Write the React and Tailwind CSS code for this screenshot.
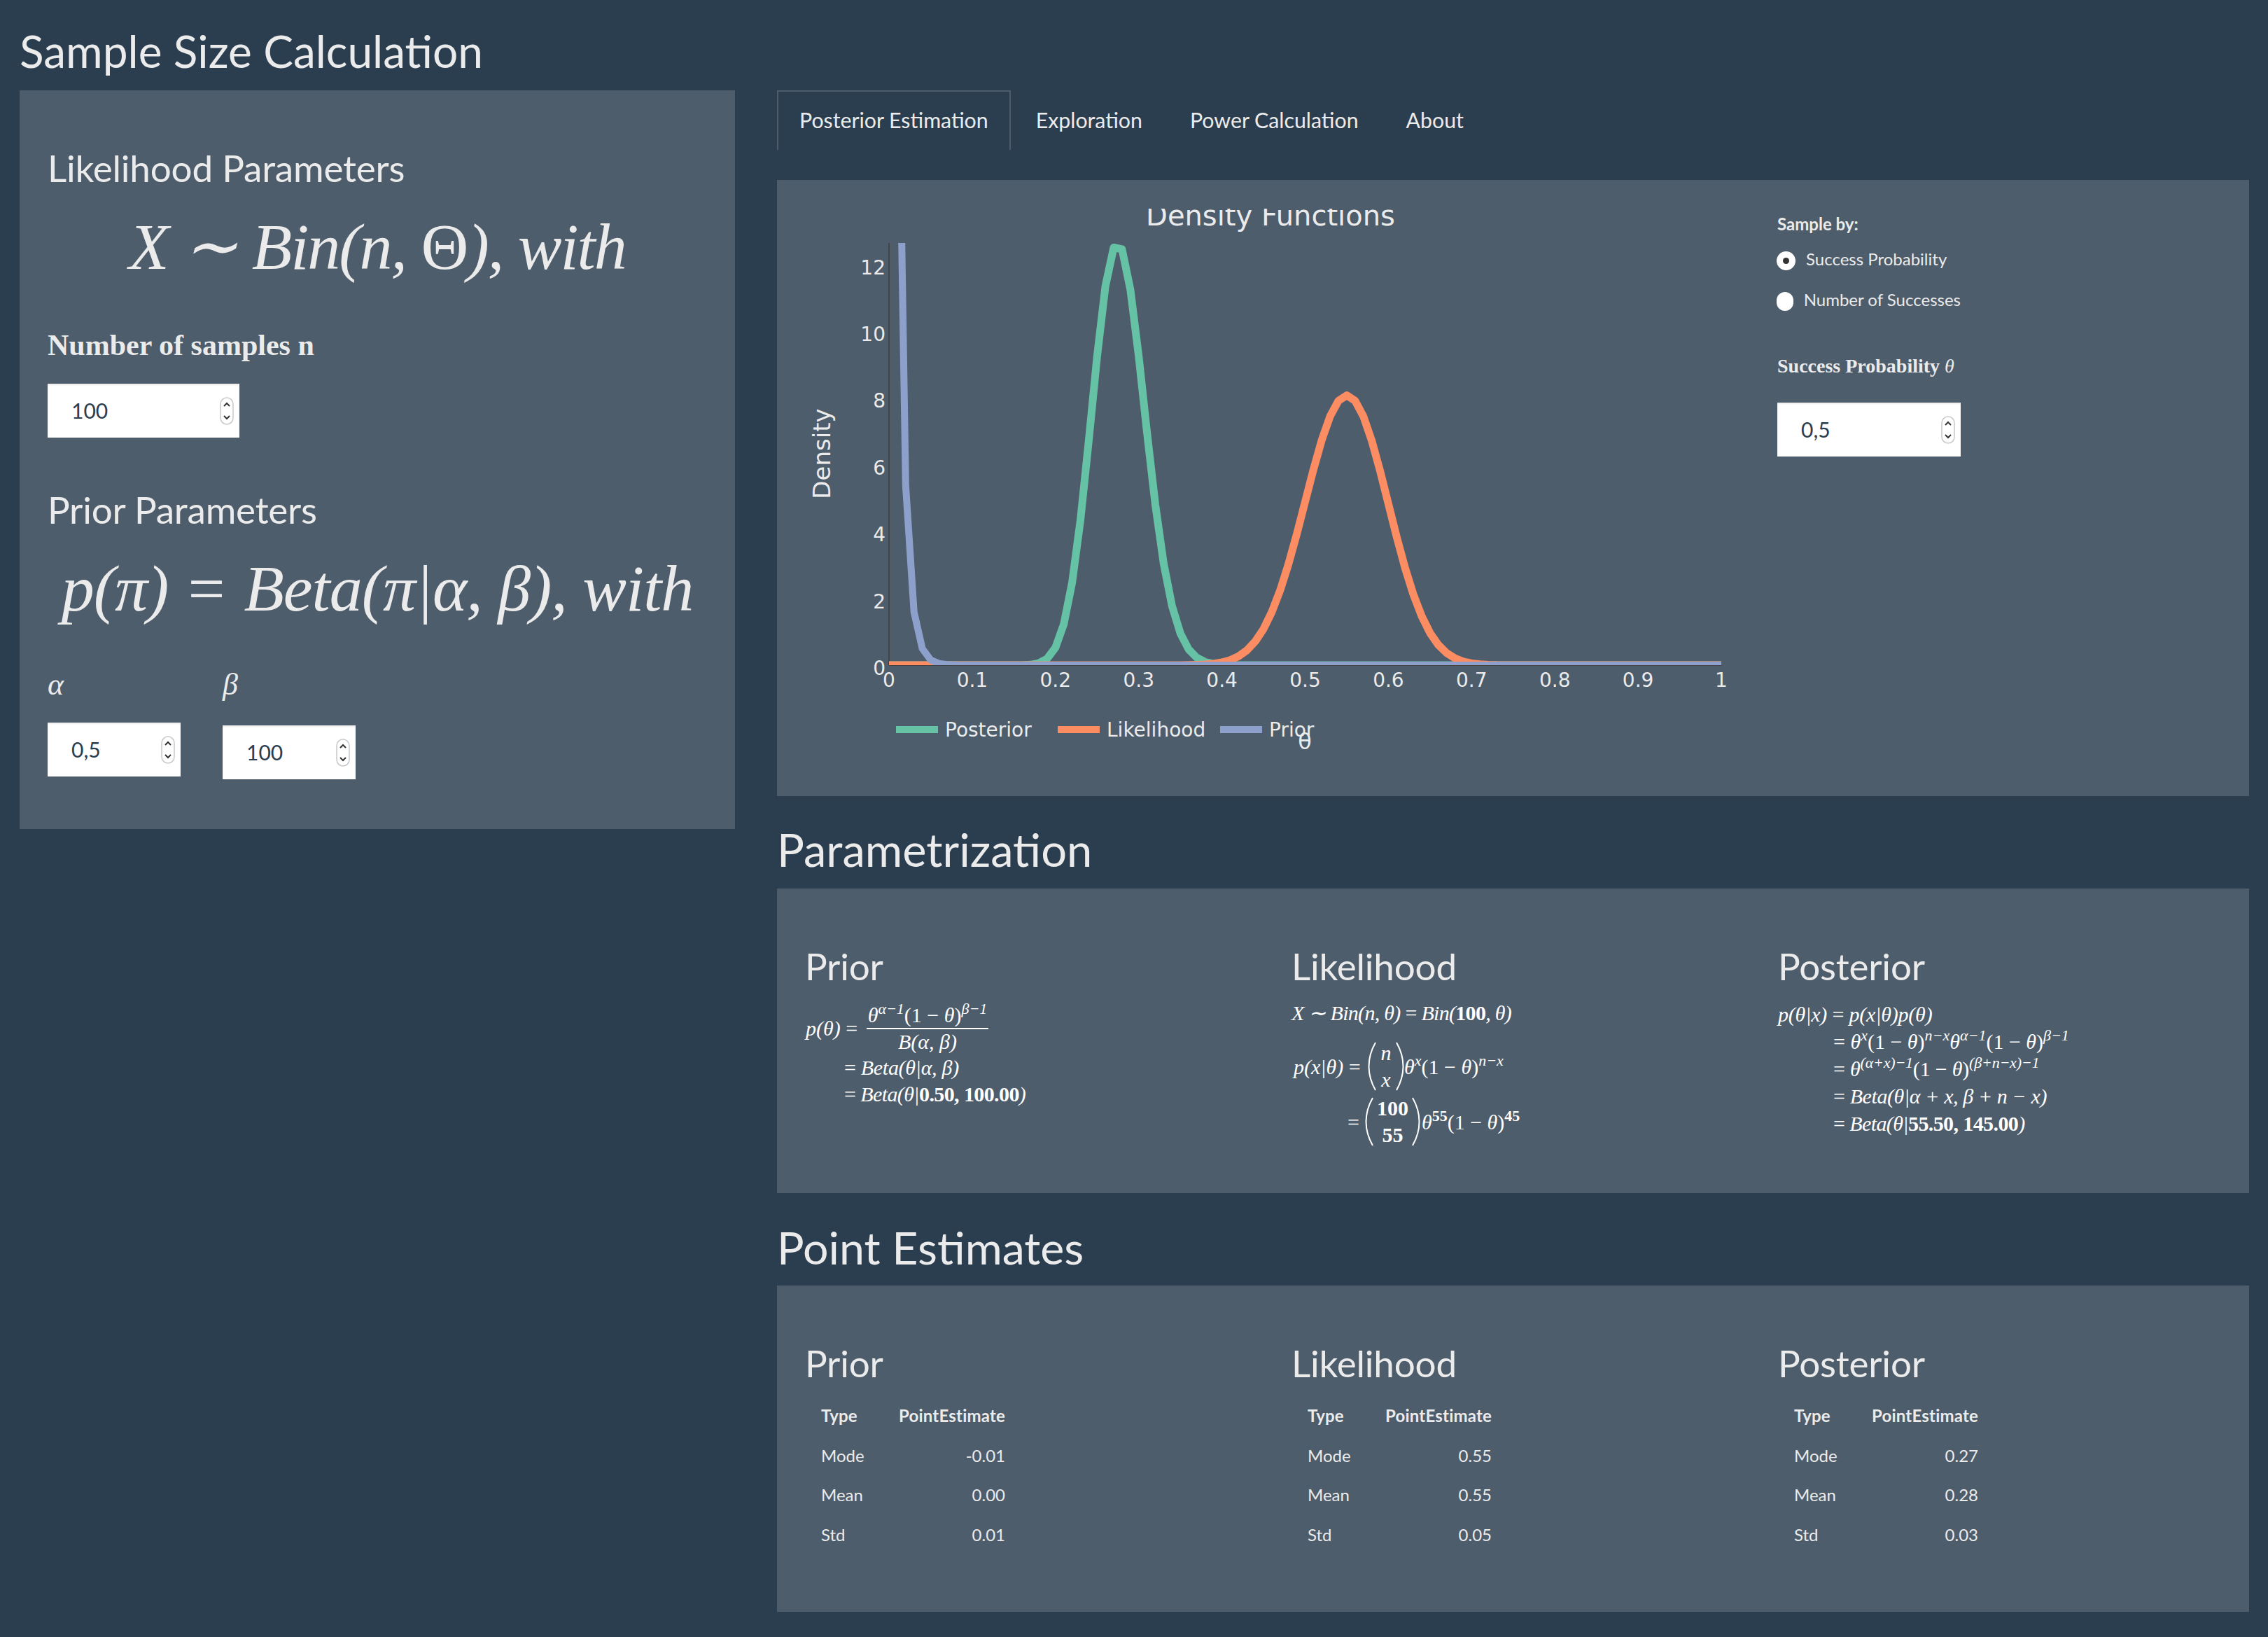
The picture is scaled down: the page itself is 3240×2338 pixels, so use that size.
import React from "react";

const SERIF = "font-['Liberation_Serif',serif]";

function logGamma(z) {
  const c = [76.18009172947146, -86.50532032941677, 24.01409824083091, -1.231739572450155, 0.001208650973866179, -0.000005395239384953];
  let x = z, y = z;
  let tmp = x + 5.5;
  tmp -= (x + 0.5) * Math.log(tmp);
  let ser = 1.000000000190015;
  for (const k of c) ser += k / ++y;
  return -tmp + Math.log((2.5066282746310005 * ser) / x);
}

function betaPdf(x, a, b) {
  if (x <= 0 || x >= 1) return 0;
  return Math.exp((a - 1) * Math.log(x) + (b - 1) * Math.log(1 - x) + logGamma(a + b) - logGamma(a) - logGamma(b));
}

const X0 = 1270, X1 = 2459, Y0 = 950, UNIT = 47.7;
const px = (v) => X0 + v * (X1 - X0);
const py = (v) => Y0 - v * UNIT;

function curve(a, b, from = 0) {
  const pts = [];
  for (let i = from; i <= 100; i++) {
    const x = i / 100;
    pts.push(`${px(x).toFixed(1)},${py(betaPdf(x, a, b)).toFixed(1)}`);
  }
  return pts.join(" ");
}

const series = [
  { name: "Posterior", color: "#66c2a5", a: 55.5, b: 145, from: 0, width: 11, sw: 1280, tx: 1350 },
  { name: "Likelihood", color: "#fc8d62", a: 56, b: 46, from: 0, width: 11, sw: 1511, tx: 1581 },
  { name: "Prior", color: "#8da0cb", a: 0.5, b: 100, from: 1, width: 10, sw: 1743, tx: 1813 },
];

function DensityChart() {
  const dv = { fontFamily: "'DejaVu Sans', sans-serif", fill: "#ebebeb" };
  return (
    <svg viewBox="1110 298 1400 800" className="block w-[1400px] h-[800px] shrink-0">
      <defs>
        <clipPath id="plot">
          <rect x={X0} y={347} width={X1 - X0} height={Y0 - 347} />
        </clipPath>
      </defs>
      <text x={1815} y={322} textAnchor="middle" fontSize={40} style={dv}>Density Functions</text>
      <line x1={X0} x2={X0} y1={347} y2={950} stroke="#444" strokeWidth={2} />
      <line x1={X0} x2={X1} y1={950} y2={950} stroke="#444" strokeWidth={2} />
      <g clipPath="url(#plot)">
        {series.map((s) => (
          <polyline key={s.name} points={curve(s.a, s.b, s.from)} fill="none" stroke={s.color} strokeWidth={s.width} strokeLinejoin="round" />
        ))}
      </g>
      {[0, 2, 4, 6, 8, 10, 12].map((v) => (
        <text key={v} x={1265} y={py(v) + 14} textAnchor="end" fontSize={28} style={dv}>{v}</text>
      ))}
      {[0, 0.1, 0.2, 0.3, 0.4, 0.5, 0.6, 0.7, 0.8, 0.9, 1].map((v) => (
        <text key={v} x={px(v)} y={981} textAnchor="middle" fontSize={28} style={dv}>{v}</text>
      ))}
      <text transform="translate(1186 648) rotate(-90)" textAnchor="middle" fontSize={34} style={dv}>Density</text>
      {series.map((s) => (
        <g key={s.name}>
          <rect x={s.sw} y={1037} width={60} height={10} fill={s.color} />
          <text x={s.tx} y={1052} fontSize={28} style={dv}>{s.name}</text>
        </g>
      ))}
      <text x={1864} y={1070} textAnchor="middle" fontSize={32} style={dv}>θ</text>
    </svg>
  );
}

function NumberBox({ value, className }) {
  return (
    <div className={`flex items-center justify-between bg-white shadow-[inset_0_2px_2px_rgba(0,0,0,0.08)] h-[77px] pl-[34px] pr-[8px] text-[30px] text-[#2b3e50] ${className}`}>
      <span>{value}</span>
      <svg width="20" height="40" viewBox="0 0 20 40" className="shrink-0">
        <rect x="1" y="1" width="18" height="38" rx="9" fill="#fff" stroke="#c8c8c8" strokeWidth="1.5" />
        <path d="M6 13l4-4 4 4M6 27l4 4 4-4" fill="none" stroke="#333" strokeWidth="2" />
      </svg>
    </div>
  );
}

function Radio({ checked, label }) {
  return (
    <div className="flex items-center h-[36px] text-[24px]">
      <span className="flex items-center justify-center w-[27px] h-[27px] rounded-full bg-white -ml-[1px] mt-[4px] mr-[15px]">
        {checked && <span className="w-[9px] h-[9px] rounded-full bg-[#333]" />}
      </span>
      <span>{label}</span>
    </div>
  );
}

const Sup = ({ children }) => <span className="text-[22px] align-[12px] leading-none">{children}</span>;
const B = ({ children }) => <b className="font-bold not-italic">{children}</b>;

function Paren({ flip }) {
  return (
    <svg width="13" height="70" viewBox="0 0 13 70" className={flip ? "-scale-x-100" : ""}>
      <path d="M11 1C3 15 1.5 25 1.5 35S3 55 11 69" fill="none" stroke="#fff" strokeWidth="2" />
    </svg>
  );
}

function Binom({ top, bottom }) {
  return (
    <span className="inline-flex items-center h-[70px]">
      <Paren />
      <span className="flex flex-col items-center justify-between h-[70px] px-[4px] leading-[32px] min-w-[26px]">
        <span>{top}</span>
        <span>{bottom}</span>
      </span>
      <Paren flip />
    </span>
  );
}

const mathCol = `${SERIF} text-[30px] text-white italic`;

function PriorMath() {
  return (
    <div className={`${mathCol} mt-[20px]`}>
      <div className="flex items-center">
        <span className="w-[88px] pl-[1px] whitespace-nowrap">p(θ) <span className="not-italic">=</span></span>
        <span className="flex flex-col items-center w-[174px]">
          <span className="h-[38px] leading-[36px] whitespace-nowrap">θ<Sup>α−1</Sup><span className="not-italic">(1 − </span>θ<span className="not-italic">)</span><Sup>β−1</Sup></span>
          <span className="w-full h-[2px] bg-white" />
          <span className="h-[36px] leading-[36px] whitespace-nowrap">B(α, β)</span>
        </span>
      </div>
      <div className="h-[38px] leading-[38px] ml-[56px] whitespace-nowrap tracking-[-0.3px]"><span className="not-italic">= </span>Beta(θ|α, β)</div>
      <div className="h-[38px] leading-[38px] ml-[56px] whitespace-nowrap tracking-[-0.6px]"><span className="not-italic">= </span>Beta(θ|<B>0.50, 100.00</B>)</div>
    </div>
  );
}

function LikelihoodMath() {
  return (
    <div className={`${mathCol} mt-[19px]`}>
      <div className="h-[36px] leading-[36px] whitespace-nowrap tracking-[-0.7px]">X ∼ Bin(n, θ) <span className="not-italic">=</span> Bin(<B>100</B>, θ)</div>
      <div className="flex items-center h-[70px] mt-[23px] whitespace-nowrap">
        <span className="w-[109px] pl-[3px]">p(x|θ) <span className="not-italic">=</span></span>
        <Binom top="n" bottom="x" />
        <span>θ<Sup>x</Sup><span className="not-italic">(1 − </span>θ<span className="not-italic">)</span><Sup>n−x</Sup></span>
      </div>
      <div className="flex items-center h-[70px] mt-[9px] ml-[80px] whitespace-nowrap">
        <span className="not-italic mr-[8px]">=</span>
        <Binom top={<B>100</B>} bottom={<B>55</B>} />
        <span className="ml-[2px]">θ<Sup><B>55</B></Sup><span className="not-italic">(1 − </span>θ<span className="not-italic">)</span><Sup><B>45</B></Sup></span>
      </div>
    </div>
  );
}

function PosteriorMath() {
  const rows = [
    { track: "tracking-normal", el: <>θ<Sup>x</Sup><span className="not-italic">(1 − </span>θ<span className="not-italic">)</span><Sup>n−x</Sup>θ<Sup>α−1</Sup><span className="not-italic">(1 − </span>θ<span className="not-italic">)</span><Sup>β−1</Sup></> },
    { track: "tracking-[-0.2px]", el: <>θ<Sup>(α+x)−1</Sup><span className="not-italic">(1 − </span>θ<span className="not-italic">)</span><Sup>(β+n−x)−1</Sup></> },
    { track: "tracking-[-0.4px]", el: <>Beta(θ|α + x, β + n − x)</> },
    { track: "tracking-[-0.6px]", el: <>Beta(θ|<B>55.50, 145.00</B>)</> },
  ];
  return (
    <div className={`${mathCol} mt-[19px]`}>
      <div className="h-[39px] leading-[39px] whitespace-nowrap tracking-[-0.2px]">p(θ|x) <span className="not-italic">=</span> p(x|θ)p(θ)</div>
      {rows.map((r, i) => (
        <div key={i} className={`h-[39px] leading-[39px] ml-[79px] whitespace-nowrap ${r.track}`}><span className="not-italic">= </span>{r.el}</div>
      ))}
    </div>
  );
}

function EstimateTable({ rows }) {
  return (
    <div className="grid grid-cols-[110px_153px] ml-[23px] mt-[17px] text-[24px] leading-[56.5px]">
      <div className="font-bold">Type</div>
      <div className="font-bold text-right tracking-[0.2px]">PointEstimate</div>
      {rows.map(([k, v]) => (
        <React.Fragment key={k}>
          <div>{k}</div>
          <div className="text-right">{v}</div>
        </React.Fragment>
      ))}
    </div>
  );
}

const h3 = "text-[53px] leading-[60px] font-normal tracking-[-0.2px]";
const threeCols = "grid grid-cols-[695px_695px_1fr] pl-[40px] pt-[81px]";

export default function App() {
  return (
    <div className="min-h-screen bg-[#2b3e50] text-[#ebebeb] font-['Lato',sans-serif] px-[28px] pt-[33px] pb-[36px]">
      <h2 className="text-[64px] leading-[80px] font-normal mb-[16px]">Sample Size Calculation</h2>
      <div className="flex items-start">
        {/* sidebar */}
        <aside className="w-[1022px] shrink-0 bg-[#4e5d6c] px-[40px] pt-[81px] pb-[71px]">
          <h3 className={h3}>Likelihood Parameters</h3>
          <div className={`${SERIF} italic text-center text-[94px] leading-[100px] mt-[32px] whitespace-nowrap tracking-[-2px]`}>X ∼ Bin(n, <span className="not-italic">Θ</span>), with</div>
          <div className={`${SERIF} font-bold text-[42px] leading-[50px] mt-[66px]`}>Number of samples n</div>
          <NumberBox value="100" className="w-[274px] mt-[30px]" />
          <h3 className={`${h3} mt-[73px]`}>Prior Parameters</h3>
          <div className={`${SERIF} italic text-center text-[94px] leading-[100px] mt-[32px] whitespace-nowrap tracking-[-1px]`}>p(π)<span className="not-italic mx-[28px]">=</span>Beta(π|α, β), with</div>
          <div className="flex gap-[60px] mt-[63px]">
            <div className="w-[190px]">
              <div className={`${SERIF} italic text-[44px] leading-[50px]`}>α</div>
              <NumberBox value="0,5" className="w-[190px] mt-[29px]" />
            </div>
            <div className="w-[190px]">
              <div className={`${SERIF} italic text-[44px] leading-[50px]`}>β</div>
              <NumberBox value="100" className="w-[190px] mt-[33px]" />
            </div>
          </div>
        </aside>

        <main className="ml-[60px] w-[2103px] shrink-0">
          {/* tabs */}
          <div className="flex text-[30.3px] leading-[85px] h-[85px]">
            <div className="border-2 border-b-0 border-[#4e5d6c] px-[30px] leading-[81px] mr-[4px]">Posterior Estimation</div>
            <div className="px-[32px] mr-[4px]">Exploration</div>
            <div className="px-[32px] mr-[4px]">Power Calculation</div>
            <div className="px-[32px]">About</div>
          </div>

          {/* chart panel */}
          <section className="flex bg-[#4e5d6c] mt-[43px] h-[880px] pt-[41px]">
            <DensityChart />
            <div className="ml-[29px] w-[262px] -mt-[41px] pt-[45px] shrink-0">
              <div className="font-bold text-[24px] leading-[36px]">Sample by:</div>
              <div className="mt-[14px]"><Radio checked label="Success Probability" /></div>
              <div className="mt-[22px] whitespace-nowrap"><Radio label="Number of Successes" /></div>
              <div className={`${SERIF} font-bold text-[28px] leading-[40px] mt-[57px] whitespace-nowrap`}>Success Probability <i className="font-normal italic">θ</i></div>
              <NumberBox value="0,5" className="w-[262px] mt-[32px]" />
            </div>
          </section>

          <h2 className="text-[65px] leading-[80px] font-normal mt-[36px] mb-[16px]">Parametrization</h2>
          <section className={`${threeCols} bg-[#4e5d6c] h-[435px]`}>
            <div><h3 className={h3}>Prior</h3><PriorMath /></div>
            <div><h3 className={h3}>Likelihood</h3><LikelihoodMath /></div>
            <div><h3 className={h3}>Posterior</h3><PosteriorMath /></div>
          </section>

          <h2 className="text-[64.5px] leading-[80px] font-normal mt-[37px] mb-[15px]">Point Estimates</h2>
          <section className={`${threeCols} bg-[#4e5d6c] h-[466px]`}>
            <div><h3 className={h3}>Prior</h3><EstimateTable rows={[["Mode", "-0.01"], ["Mean", "0.00"], ["Std", "0.01"]]} /></div>
            <div><h3 className={h3}>Likelihood</h3><EstimateTable rows={[["Mode", "0.55"], ["Mean", "0.55"], ["Std", "0.05"]]} /></div>
            <div><h3 className={h3}>Posterior</h3><EstimateTable rows={[["Mode", "0.27"], ["Mean", "0.28"], ["Std", "0.03"]]} /></div>
          </section>
        </main>
      </div>
    </div>
  );
}
